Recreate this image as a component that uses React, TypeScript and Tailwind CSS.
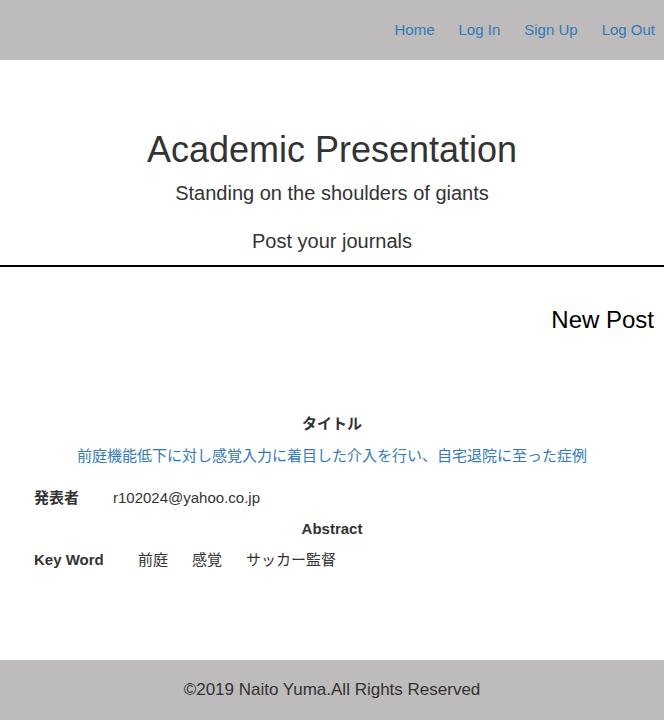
export default function App() {
  const font = { fontFamily: '"Liberation Sans", Arial, "Noto Sans CJK JP", sans-serif' };
  return (
    <div style={font} className="min-h-[720px] flex flex-col text-[#333333] bg-white">
      <header className="h-[60px] bg-[#bdbbbc] flex items-center justify-end pr-[9px] gap-[24px] text-[15px] text-[#337ab7]">
        <a href="#">Home</a>
        <a href="#">Log In</a>
        <a href="#">Sign Up</a>
        <a href="#">Log Out</a>
      </header>
      <section className="flex flex-col items-center pt-[70px] h-[207px] border-b-2 border-black">
        <h1 className="text-[36px] leading-[40px]">Academic Presentation</h1>
        <p className="text-[20px] leading-[28px] mt-[9px]">Standing on the shoulders of giants</p>
        <p className="text-[20px] leading-[28px] mt-[20px]">Post your journals</p>
      </section>
      <div className="flex justify-end pr-[10px] pt-[37px]">
        <h2 className="text-[24px] leading-[32px] text-black">New Post</h2>
      </div>
      <main className="flex flex-col pt-[78px] px-[34px] text-[15px] leading-[20px]">
        <div className="text-center font-bold">タイトル</div>
        <div className="text-center text-[#337ab7] mt-[12px]">
          前庭機能低下に対し感覚入力に着目した介入を行い、自宅退院に至った症例
        </div>
        <div className="flex mt-[22px]">
          <span className="font-bold w-[79px]">発表者</span>
          <span>r102024@yahoo.co.jp</span>
        </div>
        <div className="text-center font-bold mt-[11px]">Abstract</div>
        <div className="flex mt-[11px]">
          <span className="font-bold w-[104px]">Key Word</span>
          <span className="mr-[24px]">前庭</span>
          <span className="mr-[24px]">感覚</span>
          <span>サッカー監督</span>
        </div>
      </main>
      <div className="flex-1" />
      <footer className="h-[60px] bg-[#bdbbbc] flex items-center justify-center text-[17px]">
        ©2019 Naito Yuma.All Rights Reserved
      </footer>
    </div>
  );
}
